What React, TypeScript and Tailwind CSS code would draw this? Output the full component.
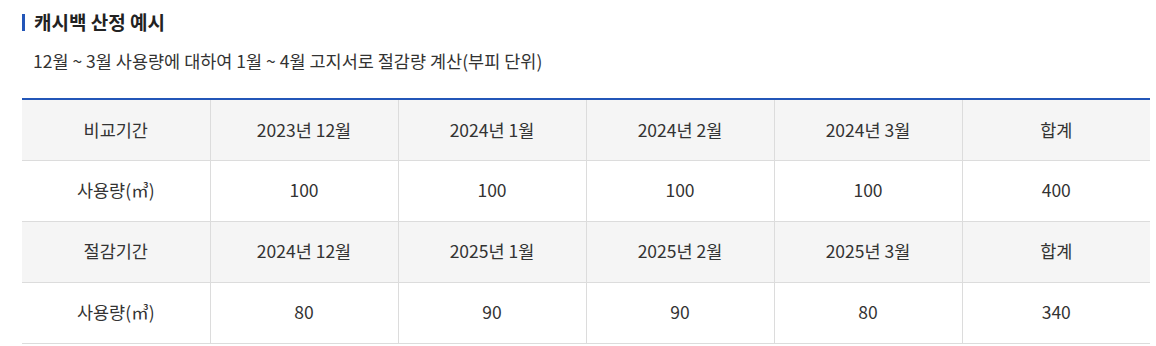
const rows = [
    { head: true, cells: ['비교기간', '2023년 12월', '2024년 1월', '2024년 2월', '2024년 3월', '합계'] },
    { head: false, cells: ['사용량(㎥)', '100', '100', '100', '100', '400'] },
    { head: true, cells: ['절감기간', '2024년 12월', '2025년 1월', '2025년 2월', '2025년 3월', '합계'] },
    { head: false, cells: ['사용량(㎥)', '80', '90', '90', '80', '340'] },
];

export default function App() {
    return (
        <div
            className="w-[1156px] h-[346px] bg-white text-[#333] pl-[22px] pr-[6px] pt-[10px]"
            style={{ fontFamily: '"Noto Sans CJK KR", "Noto Sans", sans-serif' }}
        >
            <div className="flex items-center h-[24px]">
                <span className="w-[3px] h-[17px] bg-[#2356b8] mr-[9px]" />
                <h3 className="text-[19px] font-bold text-[#222] leading-[24px]">캐시백 산정 예시</h3>
            </div>
            <p className="mt-[15px] ml-[11px] text-[17.5px] leading-[24px] text-[#333]">
                12월 ~ 3월 사용량에 대하여 1월 ~ 4월 고지서로 절감량 계산(부피 단위)
            </p>
            <table className="mt-[25px] w-full border-t-2 border-t-[#2356b8] border-collapse table-fixed text-[17.5px]">
                <tbody>
                    {rows.map((row, i) => (
                        <tr key={i} className={row.head ? 'bg-[#f5f5f5]' : 'bg-white'}>
                            {row.cells.map((c, j) => (
                                <td
                                    key={j}
                                    className={
                                        'h-[61px] text-center border-b border-[#dcdcdc] ' +
                                        (j > 0 ? 'border-l' : '')
                                    }
                                >
                                    {c}
                                </td>
                            ))}
                        </tr>
                    ))}
                </tbody>
            </table>
        </div>
    );
}
